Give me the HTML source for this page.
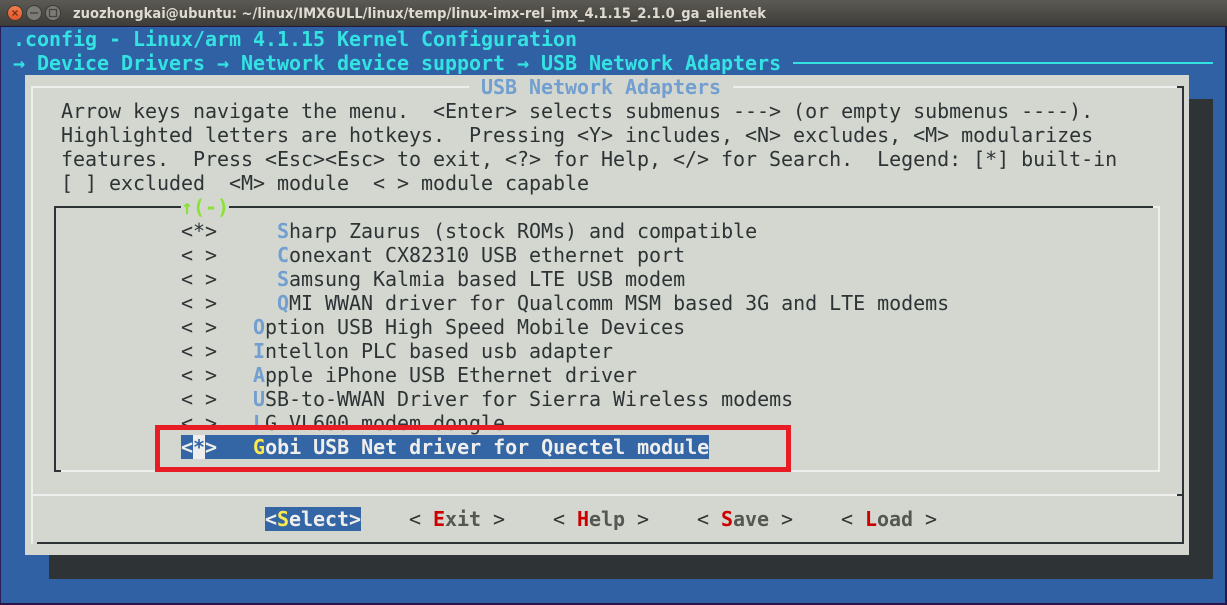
<!DOCTYPE html>
<html><head><meta charset="utf-8"><style>
html,body{margin:0;padding:0;background:#3061a5}
#w{position:relative;width:1227px;height:605px;overflow:hidden;background:#3061a5}
.a{position:absolute}
.r{position:absolute;height:24px;line-height:24px;font-family:"DejaVu Sans Mono","Liberation Mono",monospace;font-size:20px;letter-spacing:-.04px;white-space:pre;color:#2e3436}
b{font-weight:bold}
.c{color:#34e2e2;font-weight:bold}
.h{color:#729fcf;font-weight:bold}
.k{color:#cc0000;font-weight:bold}
.g{color:#555753;font-weight:bold}
.y{color:#fce94f;font-weight:bold}
.w{color:#eeeeec;font-weight:bold}
</style></head><body><div id="w">
<div class="a" style="left:0;top:0;width:1227px;height:26px;background:linear-gradient(#5c5a54,#3d3c38)"></div>
<div class="a" style="left:0;top:26px;width:1227px;height:1px;background:#211a3c"></div>
<div class="a" style="left:0;top:27px;width:1px;height:578px;background:#2a1f5a"></div>
<div class="a" style="left:1225px;top:27px;width:2px;height:578px;background:#2a1548"></div>
<div class="a" style="left:0;top:603px;width:1227px;height:2px;background:#2a1548"></div>
<svg class="a" style="left:0;top:0" width="80" height="26" viewBox="0 0 80 26">
<defs><linearGradient id="o" x1="0" y1="0" x2="0" y2="1"><stop offset="0" stop-color="#f0814f"/><stop offset="1" stop-color="#e2542a"/></linearGradient></defs>
<circle cx="15" cy="13" r="7.5" fill="url(#o)" stroke="#3c3b37"/>
<path d="M12.5 10.5l5 5M17.5 10.5l-5 5" stroke="#7a3018" stroke-width="1.4" fill="none"/>
<circle cx="34" cy="13" r="7.5" fill="#7d7b75" stroke="#3c3b37"/>
<path d="M30 13h8" stroke="#45443f" stroke-width="1.4"/>
<circle cx="53" cy="13" r="7.5" fill="#7d7b75" stroke="#3c3b37"/>
<rect x="49.5" y="9.5" width="7" height="7" fill="none" stroke="#45443f" stroke-width="1.3"/>
</svg>
<svg class="a" style="left:0;top:0" width="900" height="26"><text x="73" y="18" textLength="693" lengthAdjust="spacingAndGlyphs" font-family="'DejaVu Sans','Liberation Sans',sans-serif" font-weight="bold" font-size="14" fill="#dfdbd2">zuozhongkai@ubuntu: ~/linux/IMX6ULL/linux/temp/linux-imx-rel_imx_4.1.15_2.1.0_ga_alientek</text></svg>

<div class="r c" style="left:13px;top:27px">.config - Linux/arm 4.1.15 Kernel Configuration</div>
<div class="r c" style="left:13px;top:51px">→ Device Drivers → Network device support → USB Network Adapters</div>
<div class="a" style="left:793px;top:62px;width:420px;height:2px;background:#34e2e2"></div>

<div class="a" style="left:49px;top:99px;width:1164px;height:480px;background:#2e3436"></div>
<div class="a" style="left:25px;top:75px;width:1164px;height:480px;background:#d3d7cf"></div>

<div class="a" style="left:31px;top:86px;width:1147px;height:2px;background:#eeeeec"></div>
<div class="a" style="left:31px;top:86px;width:2px;height:458px;background:#eeeeec"></div>
<div class="a" style="left:1177px;top:86px;width:7px;height:2px;background:#2e3436"></div>
<div class="a" style="left:1182px;top:86px;width:2px;height:458px;background:#2e3436"></div>
<div class="a" style="left:37px;top:542px;width:1147px;height:2px;background:#2e3436"></div>
<div class="a" style="left:31px;top:494px;width:1147px;height:2px;background:#eeeeec"></div>
<div class="a" style="left:1177px;top:494px;width:6px;height:2px;background:#2e3436"></div>

<div class="r h" style="left:469px;top:75px;background:#d3d7cf"> USB Network Adapters </div>

<div class="r" style="left:61px;top:99px">Arrow keys navigate the menu.  &lt;Enter&gt; selects submenus ---&gt; (or empty submenus ----).</div>
<div class="r" style="left:61px;top:123px">Highlighted letters are hotkeys.  Pressing &lt;Y&gt; includes, &lt;N&gt; excludes, &lt;M&gt; modularizes</div>
<div class="r" style="left:61px;top:147px">features.  Press &lt;Esc&gt;&lt;Esc&gt; to exit, &lt;?&gt; for Help, &lt;/&gt; for Search.  Legend: [*] built-in</div>
<div class="r" style="left:61px;top:171px">[ ] excluded  &lt;M&gt; module  &lt; &gt; module capable</div>

<div class="a" style="left:54px;top:206px;width:1099px;height:2px;background:#2e3436"></div>
<div class="a" style="left:54px;top:206px;width:2px;height:266px;background:#2e3436"></div>
<div class="a" style="left:54px;top:470px;width:7px;height:2px;background:#2e3436"></div>
<div class="a" style="left:61px;top:470px;width:1099px;height:2px;background:#eeeeec"></div>
<div class="a" style="left:1153px;top:206px;width:7px;height:2px;background:#eeeeec"></div>
<div class="a" style="left:1158px;top:206px;width:2px;height:266px;background:#eeeeec"></div>

<div class="r" style="left:181px;top:195px;background:#d3d7cf;color:#8ae234;font-weight:bold">↑(-)</div>
<div class="r" style="left:181px;top:219px">&lt;*&gt;     <span class="h">S</span>harp Zaurus (stock ROMs) and compatible</div>
<div class="r" style="left:181px;top:243px">&lt; &gt;     <span class="h">C</span>onexant CX82310 USB ethernet port</div>
<div class="r" style="left:181px;top:267px">&lt; &gt;     <span class="h">S</span>amsung Kalmia based LTE USB modem</div>
<div class="r" style="left:181px;top:291px">&lt; &gt;     <span class="h">Q</span>MI WWAN driver for Qualcomm MSM based 3G and LTE modems</div>
<div class="r" style="left:181px;top:315px">&lt; &gt;   <span class="h">O</span>ption USB High Speed Mobile Devices</div>
<div class="r" style="left:181px;top:339px">&lt; &gt;   <span class="h">I</span>ntellon PLC based usb adapter</div>
<div class="r" style="left:181px;top:363px">&lt; &gt;   <span class="h">A</span>pple iPhone USB Ethernet driver</div>
<div class="r" style="left:181px;top:387px">&lt; &gt;   <span class="h">U</span>SB-to-WWAN Driver for Sierra Wireless modems</div>
<div class="r" style="left:181px;top:411px">&lt; &gt;   <span class="h">L</span>G VL600 modem dongle</div>

<div class="a" style="left:181px;top:435px;width:528px;height:24px;background:#3465a4"></div>
<div class="a" style="left:193px;top:435px;width:12px;height:24px;background:#eeeeec"></div>
<div class="r w" style="left:181px;top:435px">&lt;<span style="color:#3465a4">*</span>&gt;   <span class="y">G</span>obi USB Net driver for Quectel module</div>

<div class="a" style="left:265px;top:507px;width:96px;height:24px;background:#3465a4"></div>
<div class="r w" style="left:265px;top:507px">&lt;<span class="y">S</span>elect&gt;</div>
<div class="r" style="left:409px;top:507px">&lt; <span class="k">E</span><span class="g">xit</span> &gt;</div>
<div class="r" style="left:553px;top:507px">&lt; <span class="k">H</span><span class="g">elp</span> &gt;</div>
<div class="r" style="left:697px;top:507px">&lt; <span class="k">S</span><span class="g">ave</span> &gt;</div>
<div class="r" style="left:841px;top:507px">&lt; <span class="k">L</span><span class="g">oad</span> &gt;</div>

<div class="a" style="left:155px;top:425px;width:626px;height:37px;border:5px solid #e81c24"></div>
</div></body></html>
